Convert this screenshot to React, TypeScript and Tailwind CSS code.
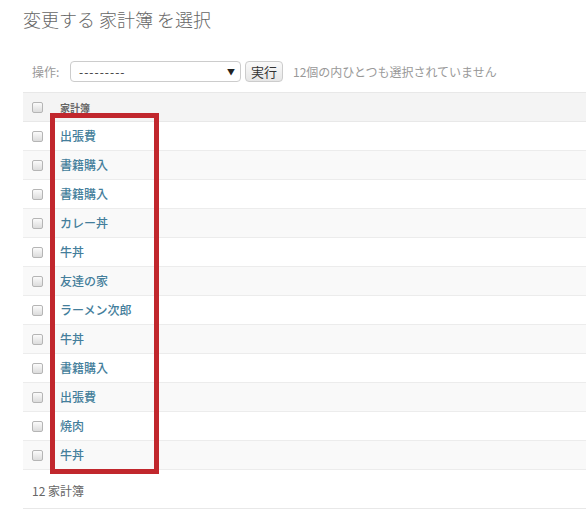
import React from "react";

const rows = [
  "出張費",
  "書籍購入",
  "書籍購入",
  "カレー丼",
  "牛丼",
  "友達の家",
  "ラーメン次郎",
  "牛丼",
  "書籍購入",
  "出張費",
  "焼肉",
  "牛丼",
];

function Check() {
  return (
    <span className="inline-block w-[11px] h-[11px] rounded-[2px] border border-[#b5b5b5] bg-gradient-to-b from-[#fbfbfb] to-[#dcdcdc]" />
  );
}

export default function App() {
  return (
    <div
      className="relative w-[586px] h-[511px] overflow-hidden bg-white"
      style={{ fontFamily: '"Noto Sans CJK JP", "Noto Sans", sans-serif' }}
    >
      <div className="pl-[23px]">
        <div className="h-[58px] pt-[8px]">
          <h1 className="text-[18px] leading-[22px] font-light text-[#666]">
            変更する 家計簿 を選択
          </h1>
        </div>
        <div className="h-[27px] flex items-center pl-[9px] text-[12px] text-[#999]">
          <span className="w-[38px]">操作:</span>
          <div className="w-[171px] h-[21px] border border-[#ccc] rounded-[4px] flex items-center justify-between pl-[8px] pr-[5px] text-[#333] text-[12px] bg-white">
            <span className="tracking-[1px]">---------</span>
            <span className="text-[8px] text-[#222]">▼</span>
          </div>
          <div className="ml-[4px] w-[38px] h-[21px] border border-[#ccc] rounded-[4px] flex items-center justify-center text-[13px] text-[#333] bg-gradient-to-b from-[#fafafa] to-[#e6e6e6]">
            実行
          </div>
          <span className="ml-[10px] text-[12px] text-[#999]">
            12個の内ひとつも選択されていません
          </span>
        </div>
        <div className="mt-[7px]">
          <div className="h-[30px] flex items-center bg-[#f4f4f4] border-t border-b border-[#e8e8e8]">
            <div className="w-[37px] pl-[9px] flex items-center">
              <Check />
            </div>
            <span className="text-[10px] font-bold text-[#666]">家計簿</span>
          </div>
          {rows.map((r, i) => (
            <div
              key={i}
              className={
                "h-[29px] flex items-center border-b border-[#ececec] " +
                (i % 2 === 1 ? "bg-[#f9f9f9]" : "bg-white")
              }
            >
              <div className="w-[37px] pl-[9px] flex items-center">
                <Check />
              </div>
              <span className="text-[12px] font-medium text-[#447e9b]">{r}</span>
            </div>
          ))}
          <div className="h-[39px] flex items-center pl-[9px] pt-[4px] border-b border-[#e8e8e8] text-[12px] text-[#666]">
            12 家計簿
          </div>
        </div>
      </div>
      <div className="absolute left-[50px] top-[113px] w-[109px] h-[361px] border-[5px] border-[#c1272d]" />
    </div>
  );
}
